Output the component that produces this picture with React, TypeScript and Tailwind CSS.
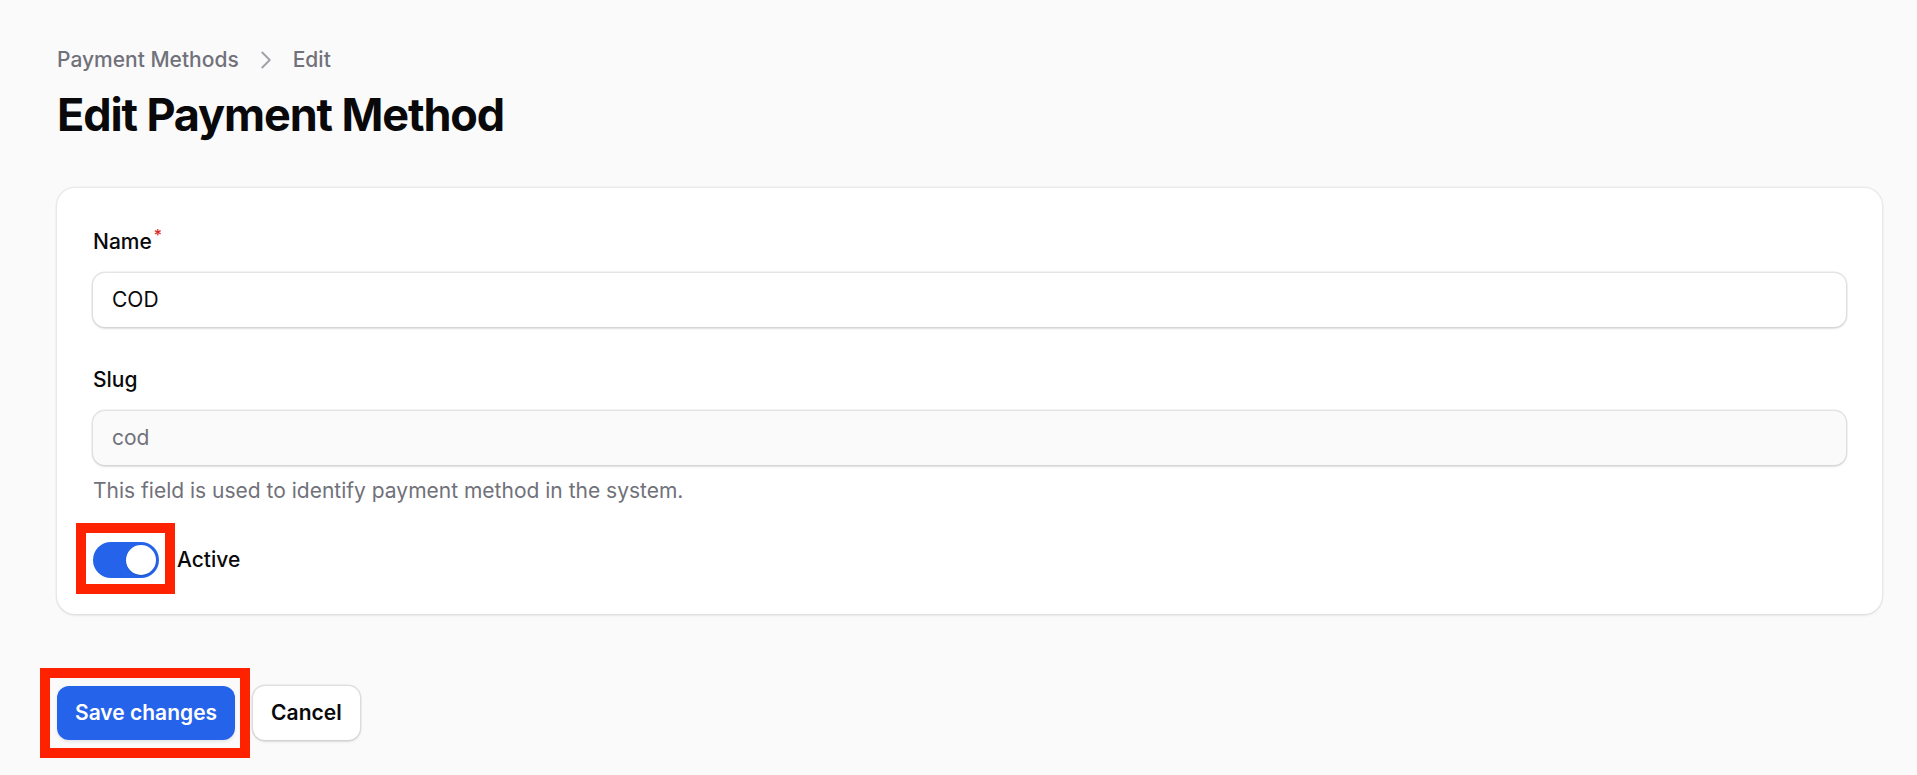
import { ChevronRight } from "lucide-react";

function Field({
  label,
  required,
  children,
  hint,
}: {
  label: string;
  required?: boolean;
  children: React.ReactNode;
  hint?: string;
}) {
  return (
    <div className="flex flex-col">
      <label className="text-[21px] font-medium leading-[30px] text-[#09090b]">
        {label}
        {required && <sup className="ml-[2px] font-medium text-[#dc2626]">*</sup>}
      </label>
      <div className="mt-[16px]">{children}</div>
      {hint && <p className="mt-[11px] text-[21px] leading-[30px] text-[#71717a]">{hint}</p>}
    </div>
  );
}

export default function App() {
  return (
    <div className="min-h-screen bg-[#fafafa] pl-[57px] pr-[35px] pt-[45px] font-['Inter',sans-serif] text-[#09090b]">
      <nav className="flex items-center gap-[12px] text-[21px] leading-[30px] font-medium text-[#71717a]">
        <span>Payment Methods</span>
        <ChevronRight className="h-[30px] w-[30px] text-[#a1a1aa]" strokeWidth={1.5} />
        <span>Edit</span>
      </nav>

      <h1 className="mt-[13px] text-[45px] font-bold leading-[54px] tracking-tight text-[#09090b]">
        Edit Payment Method
      </h1>

      <section className="mt-[46px] rounded-[18px] bg-white px-[36px] pb-[36px] pt-[39px] shadow-[0_0_0_1.5px_rgba(9,9,11,0.06),0_1.5px_3px_rgba(0,0,0,0.05)]">
        <div className="flex flex-col gap-[38px]">
          <Field label="Name" required>
            <div className="flex h-[54px] items-center rounded-[12px] bg-white px-[19px] text-[21px] text-[#09090b] shadow-[0_0_0_1.5px_rgba(9,9,11,0.1),0_1.5px_3px_rgba(0,0,0,0.08)]">
              COD
            </div>
          </Field>

          <Field label="Slug" hint="This field is used to identify payment method in the system.">
            <div className="flex h-[54px] items-center rounded-[12px] bg-[#fafafa] px-[19px] text-[21px] text-[#71717a] shadow-[0_0_0_1.5px_rgba(9,9,11,0.1),0_1.5px_3px_rgba(0,0,0,0.08)]">
              cod
            </div>
          </Field>

          <div className="-mt-[2px] flex items-center gap-[18px]">
            <div className="relative">
              <button
                type="button"
                className="flex h-[36px] w-[66px] items-center justify-end rounded-full bg-[#2563eb] p-[3px]"
              >
                <span className="h-[30px] w-[30px] rounded-full bg-white shadow-[0_1px_2px_rgba(0,0,0,0.15)]" />
              </button>
              <div className="pointer-events-none absolute -bottom-[16px] -left-[17px] -right-[16px] -top-[19px] border-[10px] border-[#ff2200]" />
            </div>
            <span className="text-[21px] font-medium leading-[30px] text-[#09090b]">Active</span>
          </div>
        </div>
      </section>

      <div className="mt-[72px] flex items-center gap-[18px]">
        <div className="relative">
          <button
            type="button"
            className="h-[54px] rounded-[12px] bg-[#2563eb] px-[18px] text-[21px] font-semibold text-white shadow-[0_1.5px_3px_rgba(0,0,0,0.08)]"
          >
            Save changes
          </button>
          <div className="pointer-events-none absolute -bottom-[18px] -left-[17px] -right-[15px] -top-[18px] border-[10px] border-[#ff2200]" />
        </div>
        <button
          type="button"
          className="h-[54px] rounded-[12px] bg-white px-[18px] text-[21px] font-semibold text-[#09090b] shadow-[0_0_0_1.5px_rgba(9,9,11,0.1),0_1.5px_3px_rgba(0,0,0,0.08)]"
        >
          Cancel
        </button>
      </div>
    </div>
  );
}
